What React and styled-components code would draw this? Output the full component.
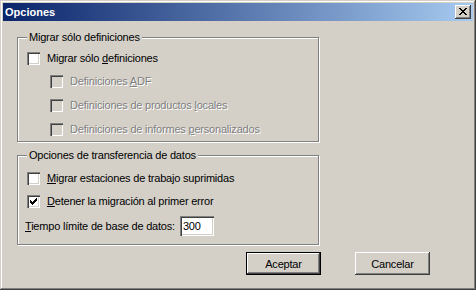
import styled, { createGlobalStyle } from 'styled-components';

const GlobalStyle = createGlobalStyle`
  html, body {
    margin: 0;
    padding: 0;
    background: #d4d0c8;
  }
  body {
    font-family: "Liberation Sans", Arial, sans-serif;
    font-size: 11px;
    letter-spacing: -0.2px;
    color: #000;
  }
`;

const Window = styled.div`
  width: 476px;
  height: 290px;
  box-sizing: border-box;
  padding: 3px;
  background: #d4d0c8;
  box-shadow: inset -1px -1px 0 #404040, inset 1px 1px 0 #d4d0c8,
    inset -2px -2px 0 #808080, inset 2px 2px 0 #ffffff;
  display: flex;
  flex-direction: column;
`;

const TitleBar = styled.div`
  height: 18px;
  flex: none;
  display: flex;
  align-items: center;
  justify-content: space-between;
  padding: 0 2px 0 2px;
  background: linear-gradient(to right, #0a246a, #a6caf0);
`;

const TitleText = styled.span`
  color: #fff;
  font-weight: bold;
  letter-spacing: 0;
`;

const CloseButton = styled.div`
  width: 16px;
  height: 14px;
  box-sizing: border-box;
  background: #d4d0c8;
  display: flex;
  padding: 3px 0 0 4px;
  box-shadow: inset -1px -1px 0 #404040, inset 1px 1px 0 #ffffff,
    inset -2px -2px 0 #808080, inset 2px 2px 0 #d4d0c8;
`;

const Client = styled.div`
  flex: 1;
  display: flex;
  flex-direction: column;
  padding: 16px 0 0 14px;
`;

const Group = styled.div`
  width: 302px;
  height: ${p => p.$h}px;
  margin-top: ${p => p.$top || 0}px;
  box-sizing: border-box;
  border: 1px solid #808080;
  box-shadow: inset 1px 1px 0 #ffffff, 1px 1px 0 #ffffff;
  display: flex;
  flex-direction: column;
`;

const Legend = styled.span`
  align-self: flex-start;
  margin: -7px 0 0 9px;
  padding: 0 2px;
  line-height: 13px;
  background: #d4d0c8;
`;

const Row = styled.label`
  display: flex;
  align-items: center;
  gap: 7px;
  height: 13px;
  margin-top: ${p => p.$top}px;
  margin-left: ${p => p.$indent}px;
  line-height: 13px;
  color: ${p => (p.$disabled ? '#808080' : '#000')};
  text-shadow: ${p => (p.$disabled ? '1px 1px 0 #ffffff' : 'none')};
`;

const Box = styled.span`
  width: 13px;
  height: 13px;
  flex: none;
  box-sizing: border-box;
  padding: 3px;
  display: flex;
  background: ${p => (p.$disabled ? '#d4d0c8' : '#ffffff')};
  box-shadow: inset 1px 1px 0 #808080, inset 2px 2px 0 #404040,
    inset -1px -1px 0 #ffffff, inset -2px -2px 0 #d4d0c8;
`;

const FieldRow = styled.label`
  display: flex;
  align-items: center;
  gap: 5px;
  margin: ${p => p.$top}px 0 0 7px;
`;

const NumberInput = styled.input`
  width: 34px;
  height: 20px;
  box-sizing: border-box;
  border: none;
  outline: none;
  padding: 0 0 0 3px;
  font: inherit;
  letter-spacing: inherit;
  color: #000;
  background: #ffffff;
  box-shadow: inset 1px 1px 0 #808080, inset 2px 2px 0 #404040,
    inset -1px -1px 0 #ffffff, inset -2px -2px 0 #d4d0c8;
`;

const ButtonRow = styled.div`
  display: flex;
  gap: 34px;
  margin: 7px 0 0 229px;
`;

const Button = styled.button`
  width: 75px;
  height: 23px;
  box-sizing: border-box;
  padding: 0;
  font: inherit;
  letter-spacing: inherit;
  color: #000;
  background: #d4d0c8;
  border: ${p => (p.$default ? '1px solid #000000' : 'none')};
  box-shadow: inset -1px -1px 0 #404040, inset 1px 1px 0 #ffffff,
    inset -2px -2px 0 #808080, inset 2px 2px 0 #d4d0c8;
`;

const CloseGlyph = () => (
  <svg width="8" height="7" viewBox="0 0 8 7" shapeRendering="crispEdges">
    <path
      fill="#000"
      d="M0 0h2v1H0zM6 0h2v1H6zM1 1h2v1H1zM5 1h2v1H5zM2 2h4v1H2zM3 3h2v1H3zM2 4h4v1H2zM1 5h2v1H1zM5 5h2v1H5zM0 6h2v1H0zM6 6h2v1H6z"
    />
  </svg>
);

const Check = () => (
  <svg width="7" height="7" viewBox="0 0 7 7" shapeRendering="crispEdges">
    <path
      fill="#000"
      d="M6 0h1v1H6zM5 1h2v1H5zM0 2h1v1H0zM4 2h3v1H4zM0 3h2v1H0zM3 3h3v1H3zM0 4h5v1H0zM1 5h3v1H1zM2 6h1v1H2z"
    />
  </svg>
);

const CheckRow = ({ top, indent, disabled, checked, children }) => (
  <Row $top={top} $indent={indent} $disabled={disabled}>
    <Box $disabled={disabled}>{checked && <Check />}</Box>
    <span>{children}</span>
  </Row>
);

const App = () => {
  return (
    <>
      <GlobalStyle />
      <Window>
        <TitleBar>
          <TitleText>Opciones</TitleText>
          <CloseButton>
            <CloseGlyph />
          </CloseButton>
        </TitleBar>
        <Client>
          <Group $h={105}>
            <Legend>Migrar sólo definiciones</Legend>
            <CheckRow top={8} indent={9}>
              Migrar sólo <u>d</u>efiniciones
            </CheckRow>
            <CheckRow top={10} indent={32} disabled>
              Definiciones <u>A</u>DF
            </CheckRow>
            <CheckRow top={11} indent={32} disabled>
              Definiciones de productos <u>l</u>ocales
            </CheckRow>
            <CheckRow top={11} indent={32} disabled>
              Definiciones de informes <u>p</u>ersonalizados
            </CheckRow>
          </Group>
          <Group $h={90} $top={13}>
            <Legend>Opciones de transferencia de datos</Legend>
            <CheckRow top={10} indent={9}>
              <u>M</u>igrar estaciones de trabajo suprimidas
            </CheckRow>
            <CheckRow top={10} indent={9} checked>
              <u>D</u>etener la migración al primer error
            </CheckRow>
            <FieldRow $top={8}>
              <span>
                <u>T</u>iempo límite de base de datos:
              </span>
              <NumberInput defaultValue="300" readOnly />
            </FieldRow>
          </Group>
          <ButtonRow>
            <Button $default>Aceptar</Button>
            <Button>Cancelar</Button>
          </ButtonRow>
        </Client>
      </Window>
    </>
  );
};

export default App;
